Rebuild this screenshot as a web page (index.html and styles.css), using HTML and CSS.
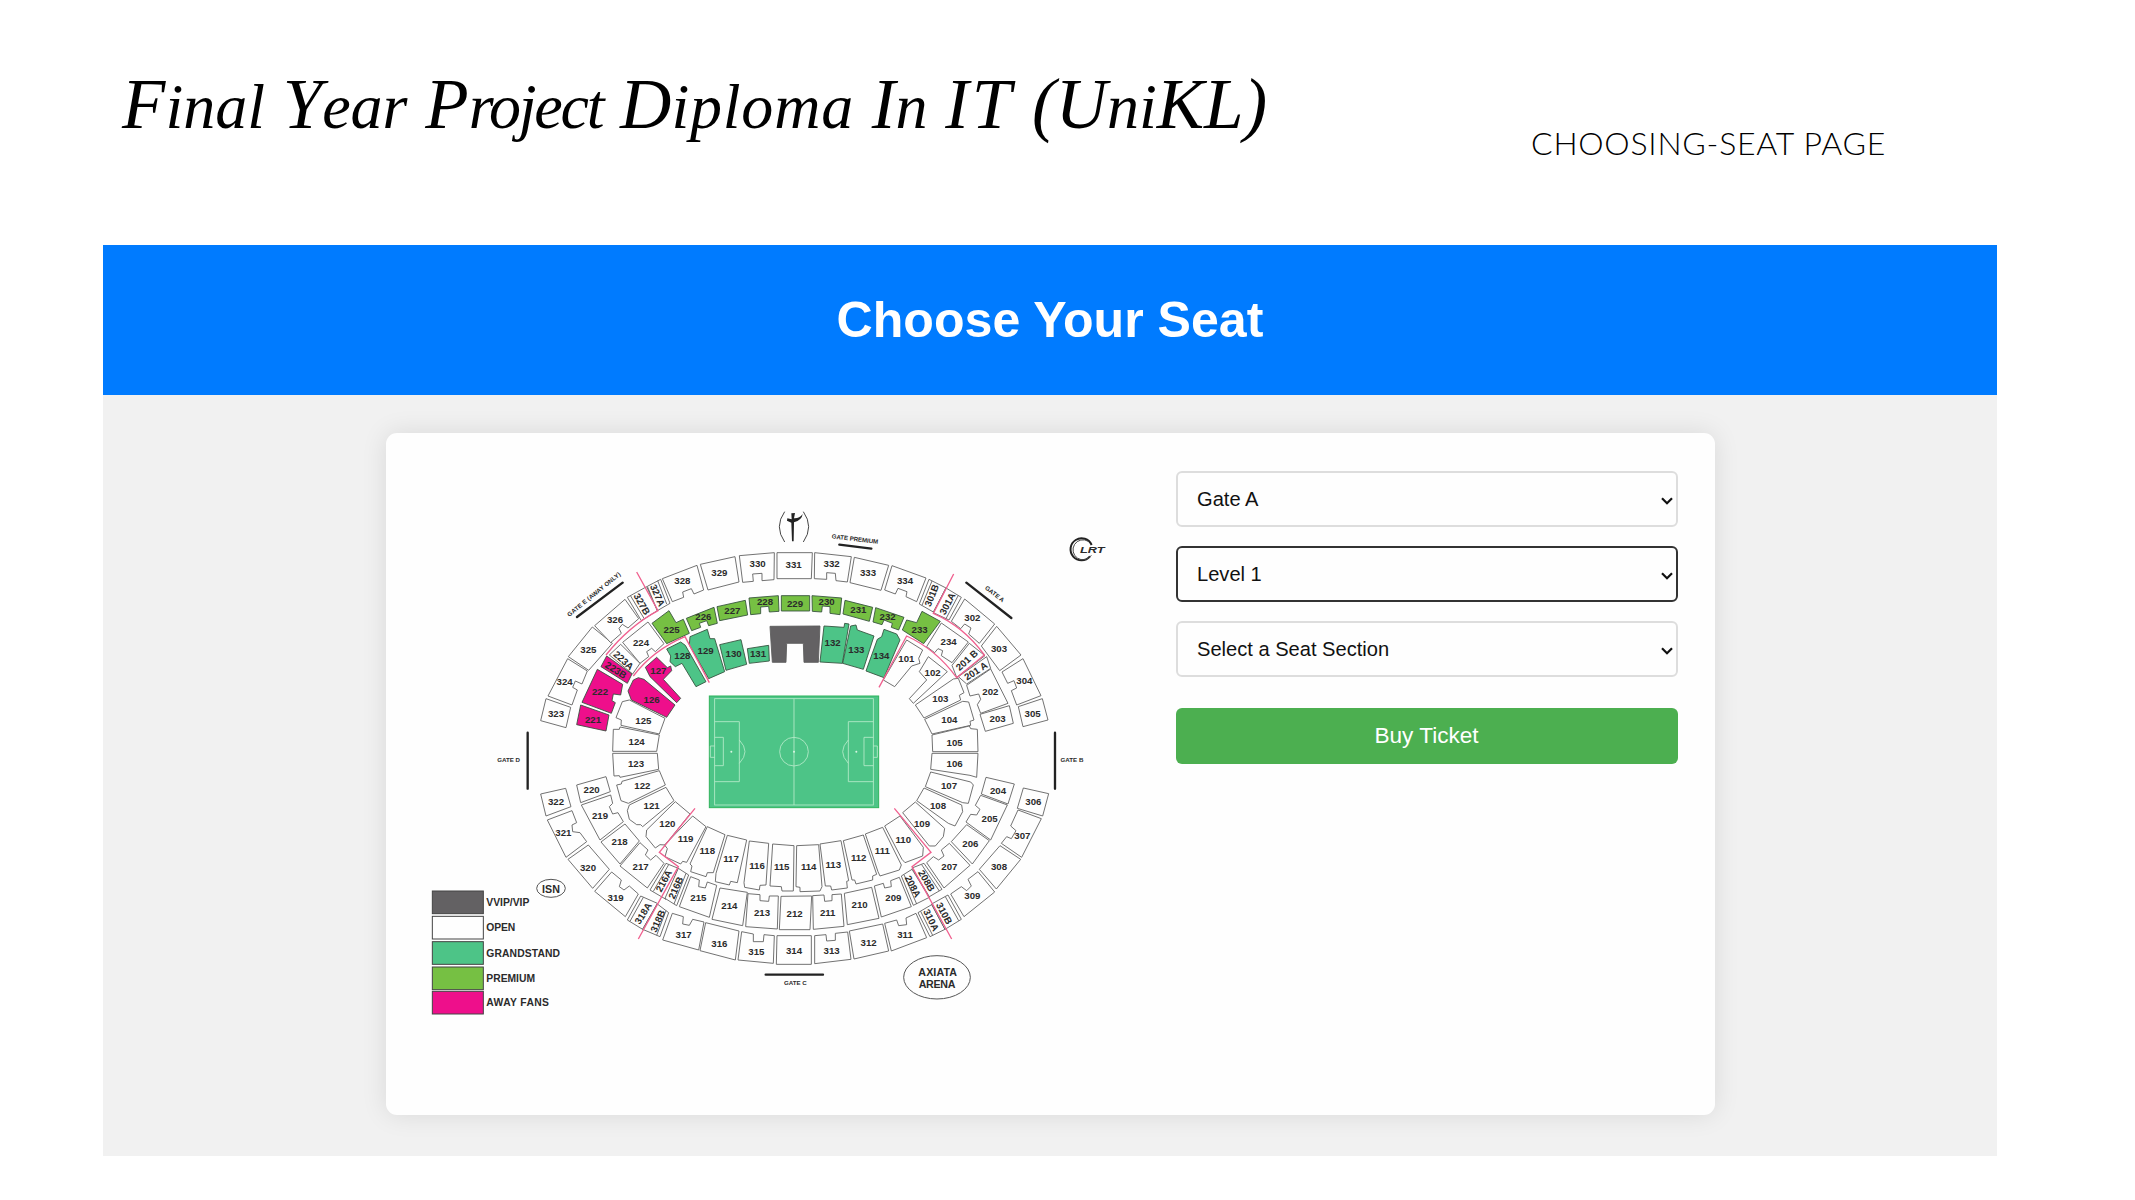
FILE: index.html
```html
<!DOCTYPE html>
<html lang="en">
<head>
<meta charset="utf-8">
<title>Choose Your Seat</title>
<link rel="stylesheet" href="styles.css">
</head>
<body>
<header class="slide-head">
  <h1 class="slide-title"><b>F</b>inal<b> Y</b>ear<b> P</b><span class="tight">roject</span><b> D</b><span class="loose">iploma</span><b> I</b>n<b> <span class="wide">IT</span> (U</b>ni<b>KL)</b></h1>
  <p class="slide-tag">CHOOSING-SEAT PAGE</p>
</header>
<main class="app">
  <div class="banner"><h2>Choose Your Seat</h2></div>
  <section class="card">
    <svg class="map" viewBox="424 490 700 540" role="img" aria-label="Stadium seating map">
      <!-- upper left quarter -->
      <g transform="translate(420 490) scale(.33333)">
        <g class="open">
          <polygon points="378,626 452,652 438,713 362,692"/>
          <polygon points="443,506 502,543 486,582 466,573 458,592 472,600 456,645 384,618"/>
          <polygon points="517,411 577,460 506,541 445,500"/>
          <polygon points="615,328 656,386 624,414 607,403 597,415 604,430 572,458 524,407"/>
          <polygon points="622,322 680,290 712,362 664,392"/>
          <polygon points="682,289 722,268 750,340 712,362"/>
          <path d="M632 318L672 385M713 272L740 342"/>
          <polygon points="727,266 831,226 851,300 822,312 814,296 788,306 791,322 757,335"/>
          <polygon points="841,223 945,200 957,276 864,300"/>
          <polygon points="684,396 732,461 706,485 695,475 680,485 686,500 660,520 608,457"/>
          <polygon points="602,463 660,520 638,552 568,495"/>
          <polygon points="607,635 628,630 735,685 718,732 603,706 604,690 588,683"/>
          <polygon points="580,718 598,718 600,711 718,735 710,784 578,784"/>
          <polygon points="578,790 712,790 716,838 600,862 598,857 582,858"/>
        </g>
        <g class="away">
          <polygon points="560,498 636,552 622,580 543,530"/>
          <polygon points="532,538 608,583 602,615 580,612 576,632 586,638 574,670 486,637"/>
          <polygon points="482,645 567,675 558,723 470,704"/>
          <polygon points="710,502 742,533 752,528 755,542 730,568 782,625 770,638 690,560 676,532"/>
          <polygon points="640,570 655,563 672,568 765,645 740,682 634,630 624,603"/>
        </g>
        <g class="premium">
          <polygon points="747,362 768,398 790,388 808,430 740,461 696,400"/>
          <polygon points="799,385 882,352 892,400 866,407 860,392 838,400 842,412 815,422"/>
          <polygon points="891,350 976,331 983,375 899,392"/>
        </g>
        <g class="grand">
          <polygon points="740,477 782,456 796,466 858,575 828,590 786,520 766,530 750,515 752,498"/>
          <polygon points="810,440 862,418 870,446 884,446 914,545 866,566 808,465"/>
          <polygon points="899,464 963,449 980,523 918,541"/>
        </g>
        <g class="num">
          <text x="408" y="671">323</text><text x="434" y="575">324</text><text x="505" y="479">325</text>
          <text x="585" y="389">326</text><text x="787" y="271">328</text><text x="898" y="247">329</text>
          <text transform="translate(666 342) rotate(60)">327B</text>
          <text transform="translate(713 316) rotate(66)">327A</text>
          <text x="663" y="457">224</text>
          <text transform="translate(611 511) rotate(42)">223A</text>
          <text transform="translate(588 540) rotate(32)">223B</text>
          <text x="540" y="606">222</text><text x="519" y="688">221</text>
          <text x="755" y="420">225</text><text x="850" y="381">226</text><text x="937" y="361">227</text>
          <text x="787" y="498">128</text><text x="857" y="482">129</text><text x="941" y="492">130</text>
          <text x="715" y="543">127</text><text x="695" y="629">126</text><text x="670" y="691">125</text>
          <text x="650" y="754">124</text><text x="648" y="821">123</text>
        </g>
        <path class="pink" d="M650 246L714 362Q628 408 558 495M640 558Q700 480 795 440L868 578"/>
        <path class="gate" d="M471 381L608 278M323 728V896"/>
        <text class="gname" transform="translate(521 312) rotate(-39)" textLength="200">GATE E (AWAY ONLY)</text>
        <text class="gname" x="266" y="809">GATE D</text>
        <!-- pitch -->
        <rect class="turf" x="868" y="618" width="508" height="335"/>
        <g class="chalk">
          <rect x="884" y="626" width="476" height="319"/>
          <path d="M1122 626V945M884 695H958V875H884M884 742H910V827H884M884 768H871V802H884M1360 695H1285V875H1360M1360 742H1332V827H1360M1360 768H1372V802H1360M958 750Q992 785 958 820M1285 750Q1251 785 1285 820"/>
          <circle cx="1122" cy="785" r="43"/>
        </g>
        <g class="spot"><circle cx="934" cy="785" r="3"/><circle cx="1122" cy="785" r="3"/><circle cx="1309" cy="785" r="3"/></g>
      </g>
      <!-- upper right quarter -->
      <g transform="translate(740 490) scale(.33333)">
        <g class="open">
          <polygon points="-2,197 103,188 102,269 66,272 66,250 38,252 40,274 8,277"/>
          <polygon points="111,188 217,188 214,266 111,266"/>
          <polygon points="224,188 334,200 322,276 288,272 286,250 260,248 260,268 223,266"/>
          <polygon points="343,202 446,226 423,301 330,278"/>
          <polygon points="456,227 558,264 530,335 498,320 501,305 474,295 466,312 434,300"/>
          <polygon points="567,268 618,294 580,366 538,342"/>
          <polygon points="618,294 664,322 627,390 580,368"/>
          <path d="M576 273L546 346M655 316L618 386"/>
          <polygon points="674,327 764,402 718,460 686,432 693,414 674,402 662,416 634,394"/>
          <polygon points="770,409 843,495 779,542 724,468"/>
          <polygon points="849,506 903,617 830,645 814,602 830,594 822,572 803,580 786,546"/>
          <polygon points="907,626 924,690 849,710 835,650"/>
          <polygon points="604,399 685,456 636,518 604,497 608,482 594,476 584,488 560,470"/>
          <polygon points="688,460 735,497 650,562 636,526"/>
          <polygon points="740,500 752,535 680,582 655,560"/>
          <polygon points="752,537 804,640 722,670 712,644 722,628 716,612 690,618 680,586"/>
          <polygon points="808,647 820,700 736,724 720,673"/>
          <polygon points="500,450 548,480 536,505 540,520 515,528 464,590 430,570"/>
          <polygon points="565,500 622,545 520,640 508,626 560,570 538,545"/>
          <polygon points="526,645 640,567 655,565 672,608 658,616 662,630 552,684"/>
          <polygon points="554,688 668,634 686,636 702,690 690,694 692,706 576,732"/>
          <polygon points="576,735 688,708 692,716 712,718 714,785 578,785"/>
          <polygon points="576,790 714,790 710,862 690,856 572,838"/>
        </g>
        <g class="premium">
          <polygon points="27,324 115,317 117,364 88,366 86,349 62,351 62,371 32,374"/>
          <polygon points="124,317 209,317 209,363 124,363"/>
          <polygon points="216,317 305,324 300,374 270,370 270,350 247,348 245,366 217,364"/>
          <polygon points="315,331 398,352 388,394 309,372"/>
          <polygon points="407,353 492,382 476,420 454,412 457,400 432,390 426,404 399,396"/>
          <polygon points="546,364 601,394 551,461 487,420 500,390 530,398"/>
        </g>
        <g class="grand">
          <polygon points="22,476 86,466 88,513 28,520"/>
          <polygon points="252,408 312,412 314,400 327,402 307,520 240,516"/>
          <polygon points="332,408 348,405 352,420 402,438 370,538 308,520"/>
          <polygon points="432,418 470,432 480,450 432,563 378,543 412,448 425,440"/>
        </g>
        <polygon class="vip" points="90,409 240,408 235,517 192,517 190,460 140,460 138,517 97,517"/>
        <g class="num">
          <text x="53" y="222">330</text><text x="161" y="223">331</text><text x="275" y="222">332</text>
          <text x="384" y="249">333</text><text x="495" y="271">334</text><text x="697" y="384">302</text>
          <text x="777" y="477">303</text><text x="853" y="571">304</text><text x="878" y="670">305</text>
          <text transform="translate(575 316) rotate(-68)">301B</text>
          <text transform="translate(622 341) rotate(-62)">301A</text>
          <text x="75" y="336">228</text><text x="165" y="341">229</text><text x="260" y="336">230</text>
          <text x="355" y="359">231</text><text x="443" y="380">232</text><text x="539" y="418">233</text>
          <text x="626" y="456">234</text>
          <text transform="translate(680 510) rotate(-42)">201 B</text>
          <text transform="translate(707 543) rotate(-33)">201 A</text>
          <text x="751" y="605">202</text><text x="773" y="685">203</text>
          <text x="54" y="490">131</text><text x="278" y="458">132</text><text x="349" y="478">133</text>
          <text x="424" y="498">134</text><text x="499" y="507">101</text><text x="578" y="548">102</text>
          <text x="601" y="627">103</text><text x="628" y="688">104</text><text x="644" y="757">105</text>
          <text x="644" y="822">106</text>
        </g>
        <path class="pink" d="M641 252L580 370Q672 410 733 495L650 563Q588 478 500 438L417 592"/>
        <path class="gate" d="M298 164L394 176M679 278L814 384M945 728V896"/>
        <text class="gname" transform="translate(345 146) rotate(7)" textLength="140">GATE PREMIUM</text>
        <text class="gname" transform="translate(765 311) rotate(38)">GATE A</text>
        <text class="gname" x="996" y="809">GATE B</text>
        <!-- dagger emblem -->
        <path class="emblem" d="M134 65Q102 110 134 156M190 65Q222 110 190 156"/>
        <path class="dagger" d="M154 70L165 69L162 85Q178 86 188 72Q186 90 162 97L161 154H156L154 98L141 92L142 85L155 88Z"/>
        <!-- rail station mark -->
        <path class="rail" d="M1055 165A33 33 0 1 0 1050 199"/>
        <path class="emblem" d="M1045 154A30 30 0 1 0 1054 196"/>
        <text class="lrt" x="1057" y="180" textLength="74" lengthAdjust="spacingAndGlyphs">LRT</text>
      </g>
      <!-- lower left quarter -->
      <g transform="translate(420 760) scale(.33333)">
        <g class="open">
          <polygon points="362,102 437,85 453,140 378,168"/>
          <polygon points="382,180 456,152 470,188 456,195 458,215 480,218 500,245 438,292"/>
          <polygon points="505,255 568,328 518,385 444,298"/>
          <polygon points="575,336 604,360 598,380 612,390 628,378 655,402 616,470 524,394"/>
          <polygon points="662,408 712,430 668,508 622,480"/>
          <polygon points="712,432 746,458 720,530 668,508"/>
          <path d="M670 412L630 484M738 452L710 526"/>
          <polygon points="757,460 790,470 788,492 808,496 818,478 852,486 836,570 728,540"/>
          <polygon points="857,488 957,513 946,600 840,572"/>
          <polygon points="470,75 558,50 571,95 482,128"/>
          <polygon points="484,135 572,105 578,130 568,140 578,162 594,158 610,185 540,240"/>
          <polygon points="615,192 658,243 600,312 543,246"/>
          <polygon points="660,248 684,270 676,285 692,300 708,286 732,310 682,384 600,318"/>
          <polygon points="738,310 775,325 738,418 690,390"/>
          <polygon points="775,325 806,345 770,437 735,415"/>
          <path d="M746 314L700 394M798 340L762 432"/>
          <polygon points="812,350 838,360 836,380 856,384 862,366 890,376 868,472 778,440"/>
          <polygon points="900,384 982,397 968,497 876,478"/>
          <polygon points="590,75 604,72 606,64 718,32 736,75 625,130 603,122"/>
          <polygon points="622,152 628,135 738,82 762,122 668,200 662,194 650,194 628,178"/>
          <polygon points="766,125 810,162 735,255 720,254 706,264 678,230 680,210"/>
          <polygon points="818,168 858,200 800,307 788,304 782,312 735,290 742,266 734,255"/>
          <polygon points="862,200 915,224 880,338 862,338 858,350 812,335 816,318 810,312"/>
          <polygon points="922,226 980,240 952,368 932,364 928,375 886,365 888,340"/>
        </g>
        <g class="num">
          <text x="408" y="125">322</text><text x="430" y="218">321</text><text x="504" y="323">320</text>
          <text x="587" y="413">319</text><text x="791" y="524">317</text><text x="898" y="550">316</text>
          <text transform="translate(669 460) rotate(-58)">318A</text>
          <text transform="translate(713 483) rotate(-66)">318B</text>
          <text x="515" y="88">220</text><text x="540" y="166">219</text><text x="599" y="244">218</text>
          <text x="662" y="321">217</text><text x="835" y="412">215</text><text x="928" y="437">214</text>
          <text transform="translate(731 363) rotate(-62)">216A</text>
          <text transform="translate(767 383) rotate(-66)">216B</text>
          <text x="667" y="77">122</text><text x="695" y="137">121</text><text x="742" y="191">120</text>
          <text x="797" y="236">119</text><text x="862" y="273">118</text><text x="933" y="297">117</text>
        </g>
        <path class="pink" d="M825 145L718 277L775 320L655 537"/>
        <ellipse class="ring" cx="393" cy="385" rx="43" ry="27"/>
        <text class="place" x="393" y="387">ISN</text>
        <!-- legend -->
        <g class="vip key"><rect x="37" y="393" width="153" height="68"/></g>
        <g class="open key"><rect x="37" y="469" width="153" height="68"/></g>
        <g class="grand key"><rect x="37" y="545" width="153" height="68"/></g>
        <g class="premium key"><rect x="37" y="621" width="153" height="68"/></g>
        <g class="away key"><rect x="37" y="694" width="153" height="68"/></g>
        <g class="legend">
          <text x="199" y="428" textLength="129">VVIP/VIP</text>
          <text x="199" y="504" textLength="87">OPEN</text>
          <text x="199" y="581" textLength="221">GRANDSTAND</text>
          <text x="199" y="656" textLength="146">PREMIUM</text>
          <text x="199" y="729" textLength="188">AWAY FANS</text>
        </g>
      </g>
      <!-- lower right quarter -->
      <g transform="translate(740 760) scale(.33333)">
        <g class="open">
          <polygon points="5,515 40,522 40,545 70,545 72,524 103,527 100,610 -6,600"/>
          <polygon points="111,527 214,527 214,613 109,613"/>
          <polygon points="224,527 258,524 260,543 286,541 286,520 323,516 333,598 224,611"/>
          <polygon points="328,513 428,492 446,573 342,597"/>
          <polygon points="434,490 470,480 476,497 500,494 498,474 528,460 560,533 454,573"/>
          <polygon points="534,458 575,434 615,508 570,530"/>
          <polygon points="575,432 624,405 664,478 615,508"/>
          <path d="M542 454L578 526M616 410L656 482"/>
          <polygon points="632,402 664,380 680,392 694,378 684,358 714,335 764,396 672,470"/>
          <polygon points="718,328 780,257 842,298 769,387"/>
          <polygon points="834,150 904,176 845,292 784,250 800,230 814,236 828,212 812,198"/>
          <polygon points="850,84 926,101 908,168 832,145"/>
          <polygon points="24,401 60,404 60,422 86,424 88,408 115,408 112,507 17,500"/>
          <polygon points="123,409 215,408 210,509 118,509"/>
          <polygon points="218,407 252,405 254,424 276,422 276,404 304,402 312,499 220,508"/>
          <polygon points="313,400 395,382 417,475 322,494"/>
          <polygon points="403,378 430,370 434,384 454,380 452,362 478,352 514,440 424,471"/>
          <polygon points="484,348 516,328 568,412 520,436"/>
          <polygon points="516,324 552,310 606,388 568,410"/>
          <path d="M492 344L530 432M545 314L598 393"/>
          <polygon points="560,308 580,290 596,300 612,288 604,270 628,250 690,316 612,384"/>
          <polygon points="634,245 680,194 748,242 697,312"/>
          <polygon points="678,186 692,163 710,165 720,148 706,136 722,106 802,135 752,240"/>
          <polygon points="738,52 823,72 804,132 724,102"/>
          <polygon points="28,243 86,250 78,375 60,376 58,390 14,382 12,368"/>
          <polygon points="98,252 162,257 160,393 126,393 124,380 90,378"/>
          <polygon points="170,257 236,254 246,380 240,393 180,395 180,382 168,380"/>
          <polygon points="240,252 303,242 326,362 320,364 322,384 275,390 272,378 256,378"/>
          <polygon points="310,242 370,225 410,343 398,348 398,360 348,372 344,360 336,360"/>
          <polygon points="376,222 428,202 484,315 478,330 420,348 414,335"/>
          <polygon points="434,198 480,168 550,262 548,288 495,308 486,298"/>
          <polygon points="488,158 526,126 614,205 610,230 586,258 568,258"/>
          <polygon points="530,122 552,84 665,135 668,155 645,198 625,190"/>
          <polygon points="556,80 572,36 692,66 700,75 685,130 668,128"/>
        </g>
        <g class="num">
          <text x="49" y="575">315</text><text x="162" y="573">314</text><text x="275" y="573">313</text>
          <text x="386" y="548">312</text><text x="495" y="524">311</text><text x="697" y="408">309</text>
          <text x="777" y="320">308</text><text x="847" y="228">307</text><text x="880" y="125">306</text>
          <text transform="translate(574 480) rotate(64)">310A</text>
          <text transform="translate(613 460) rotate(62)">310B</text>
          <text x="66" y="457">213</text><text x="164" y="460">212</text><text x="263" y="457">211</text>
          <text x="359" y="434">210</text><text x="460" y="413">209</text><text x="628" y="321">207</text>
          <text transform="translate(519 379) rotate(62)">208A</text>
          <text transform="translate(560 362) rotate(60)">208B</text>
          <text x="691" y="251">206</text><text x="749" y="175">205</text><text x="774" y="91">204</text>
          <text x="51" y="316">116</text><text x="125" y="321">115</text><text x="206" y="321">114</text>
          <text x="280" y="315">113</text><text x="356" y="293">112</text><text x="427" y="271">111</text>
          <text x="490" y="238">110</text><text x="546" y="190">109</text><text x="594" y="137">108</text>
          <text x="627" y="77">107</text>
        </g>
        <path class="pink" d="M463 145L573 277L516 320L635 537"/>
        <path class="gate" d="M77 644H249"/>
        <text class="gname" x="166" y="669">GATE C</text>
        <ellipse class="ring" cx="591" cy="652" rx="100" ry="65"/>
        <text class="place" x="593" y="636" textLength="116">AXIATA</text>
        <text class="place" x="591" y="673" textLength="110">ARENA</text>
      </g>
    </svg>
    <form class="picker">
      <div class="field">
        <select aria-label="Gate"><option>Gate A</option></select>
        <svg class="chev" viewBox="0 0 12 8"><path d="M1 1.2L6 6.2L11 1.2"/></svg>
      </div>
      <div class="field">
        <select class="active" aria-label="Level"><option>Level 1</option></select>
        <svg class="chev" viewBox="0 0 12 8"><path d="M1 1.2L6 6.2L11 1.2"/></svg>
      </div>
      <div class="field">
        <select aria-label="Section"><option>Select a Seat Section</option></select>
        <svg class="chev" viewBox="0 0 12 8"><path d="M1 1.2L6 6.2L11 1.2"/></svg>
      </div>
      <button class="buy" type="button">Buy Ticket</button>
    </form>
  </section>
</main>
</body>
</html>
```
FILE: styles.css
```css
* { box-sizing: border-box; }
body {
  margin: 0;
  height: 1200px;
  overflow: hidden;
  background: #fff;
  font-family: "Liberation Sans", Arial, sans-serif;
}
.slide-head {
  display: flex;
  align-items: baseline;
  height: 245px;
  padding: 67px 0 0 122px;
  color: #000;
}
.slide-title {
  margin: 0;
  width: 1409px;
  font: italic 400 64px/80px "Liberation Serif", "Times New Roman", serif;
  white-space: nowrap;
}
/* capitals stand taller than the small letters */
.slide-title b { font-size: 71px; font-weight: 400; line-height: 1; }
.tight { letter-spacing: -2.2px; }
.loose { letter-spacing: .8px; }
.wide { letter-spacing: 3px; }
.slide-tag {
  margin: 0;
  font: 300 32px/40px Lato, sans-serif;
  letter-spacing: .75px;
  white-space: nowrap;
  position: relative;
  top: 27px;
}
.app {
  width: 1894px;
  height: 911px;
  margin-left: 103px;
  background: #f1f1f1;
}
.banner {
  display: flex;
  align-items: center;
  justify-content: center;
  height: 150px;
  background: #007bff;
  color: #fff;
}
.banner h2 { margin: 0; font-size: 50.1px; line-height: 60px; }
.card {
  display: grid;
  grid-template-columns: 700px 502px;
  column-gap: 51.5px;
  width: 1329px;
  height: 682px;
  margin: 38px auto 0 283px;
  padding: 37.5px 37px 37px 38px;
  border-radius: 11px;
  background: #fefefe;
  box-shadow: 0 0 26px rgba(0, 0, 0, .1);
}
.map { width: 700px; height: 540px; margin-top: 19.5px; overflow: visible; }
.picker { display: flex; flex-direction: column; gap: 19px; }
.field { position: relative; height: 56.3px; }
.field select {
  appearance: none;
  width: 100%;
  height: 100%;
  padding: 0 19.5px;
  border: 2px solid #ddd;
  border-radius: 6px;
  background: #fefefe;
  color: #111;
  font: 20.1px "Liberation Sans", Arial, sans-serif;
}
.field select.active { border-color: #333; }
.chev {
  position: absolute;
  right: 5px;
  top: 26px;
  width: 12px;
  height: 8px;
  fill: none;
  stroke: #111;
  stroke-width: 2.2;
}
.buy {
  height: 56px;
  margin-top: 12px;
  border: 0;
  border-radius: 6px;
  background: #4caf50;
  color: #fff;
  font: 22.6px "Liberation Sans", Arial, sans-serif;
}

/* seating map */
.open, .away, .premium, .grand, .vip { stroke: #5c5c5c; stroke-width: 2.6; }
.away, .premium, .grand { stroke: #34503c; }
.open { fill: #fefefe; }
.away { fill: #ee0f8b; }
.premium { fill: #76c043; }
.grand { fill: #4dc487; }
.vip { fill: #636163; }
.key { stroke: #444; stroke-width: 3; }
.map text {
  font-family: "Liberation Sans", Arial, sans-serif;
  font-weight: 700;
  fill: #2b2b2b;
  dominant-baseline: central;
}
.num text { font-size: 29px; text-anchor: middle; }
.map .gname { font-size: 18.5px; text-anchor: middle; }
.map .place { font-size: 32px; text-anchor: middle; }
.legend text { font-size: 31px; }
.map .lrt { font-size: 25px; font-style: italic; text-anchor: middle; }
.pink { fill: none; stroke: #f0608f; stroke-width: 4; }
.gate { stroke: #222; stroke-width: 7; stroke-linecap: round; }
.turf { fill: #4dc487; stroke: #2fb45c; stroke-width: 3; }
.chalk { fill: none; stroke: #b9eccb; stroke-width: 2.5; }
.spot { fill: #d8f5e2; }
.emblem { fill: none; stroke: #444; stroke-width: 3; }
.dagger { fill: #222; }
.rail { fill: none; stroke: #222; stroke-width: 6; }
.ring { fill: none; stroke: #555; stroke-width: 3; }
```
